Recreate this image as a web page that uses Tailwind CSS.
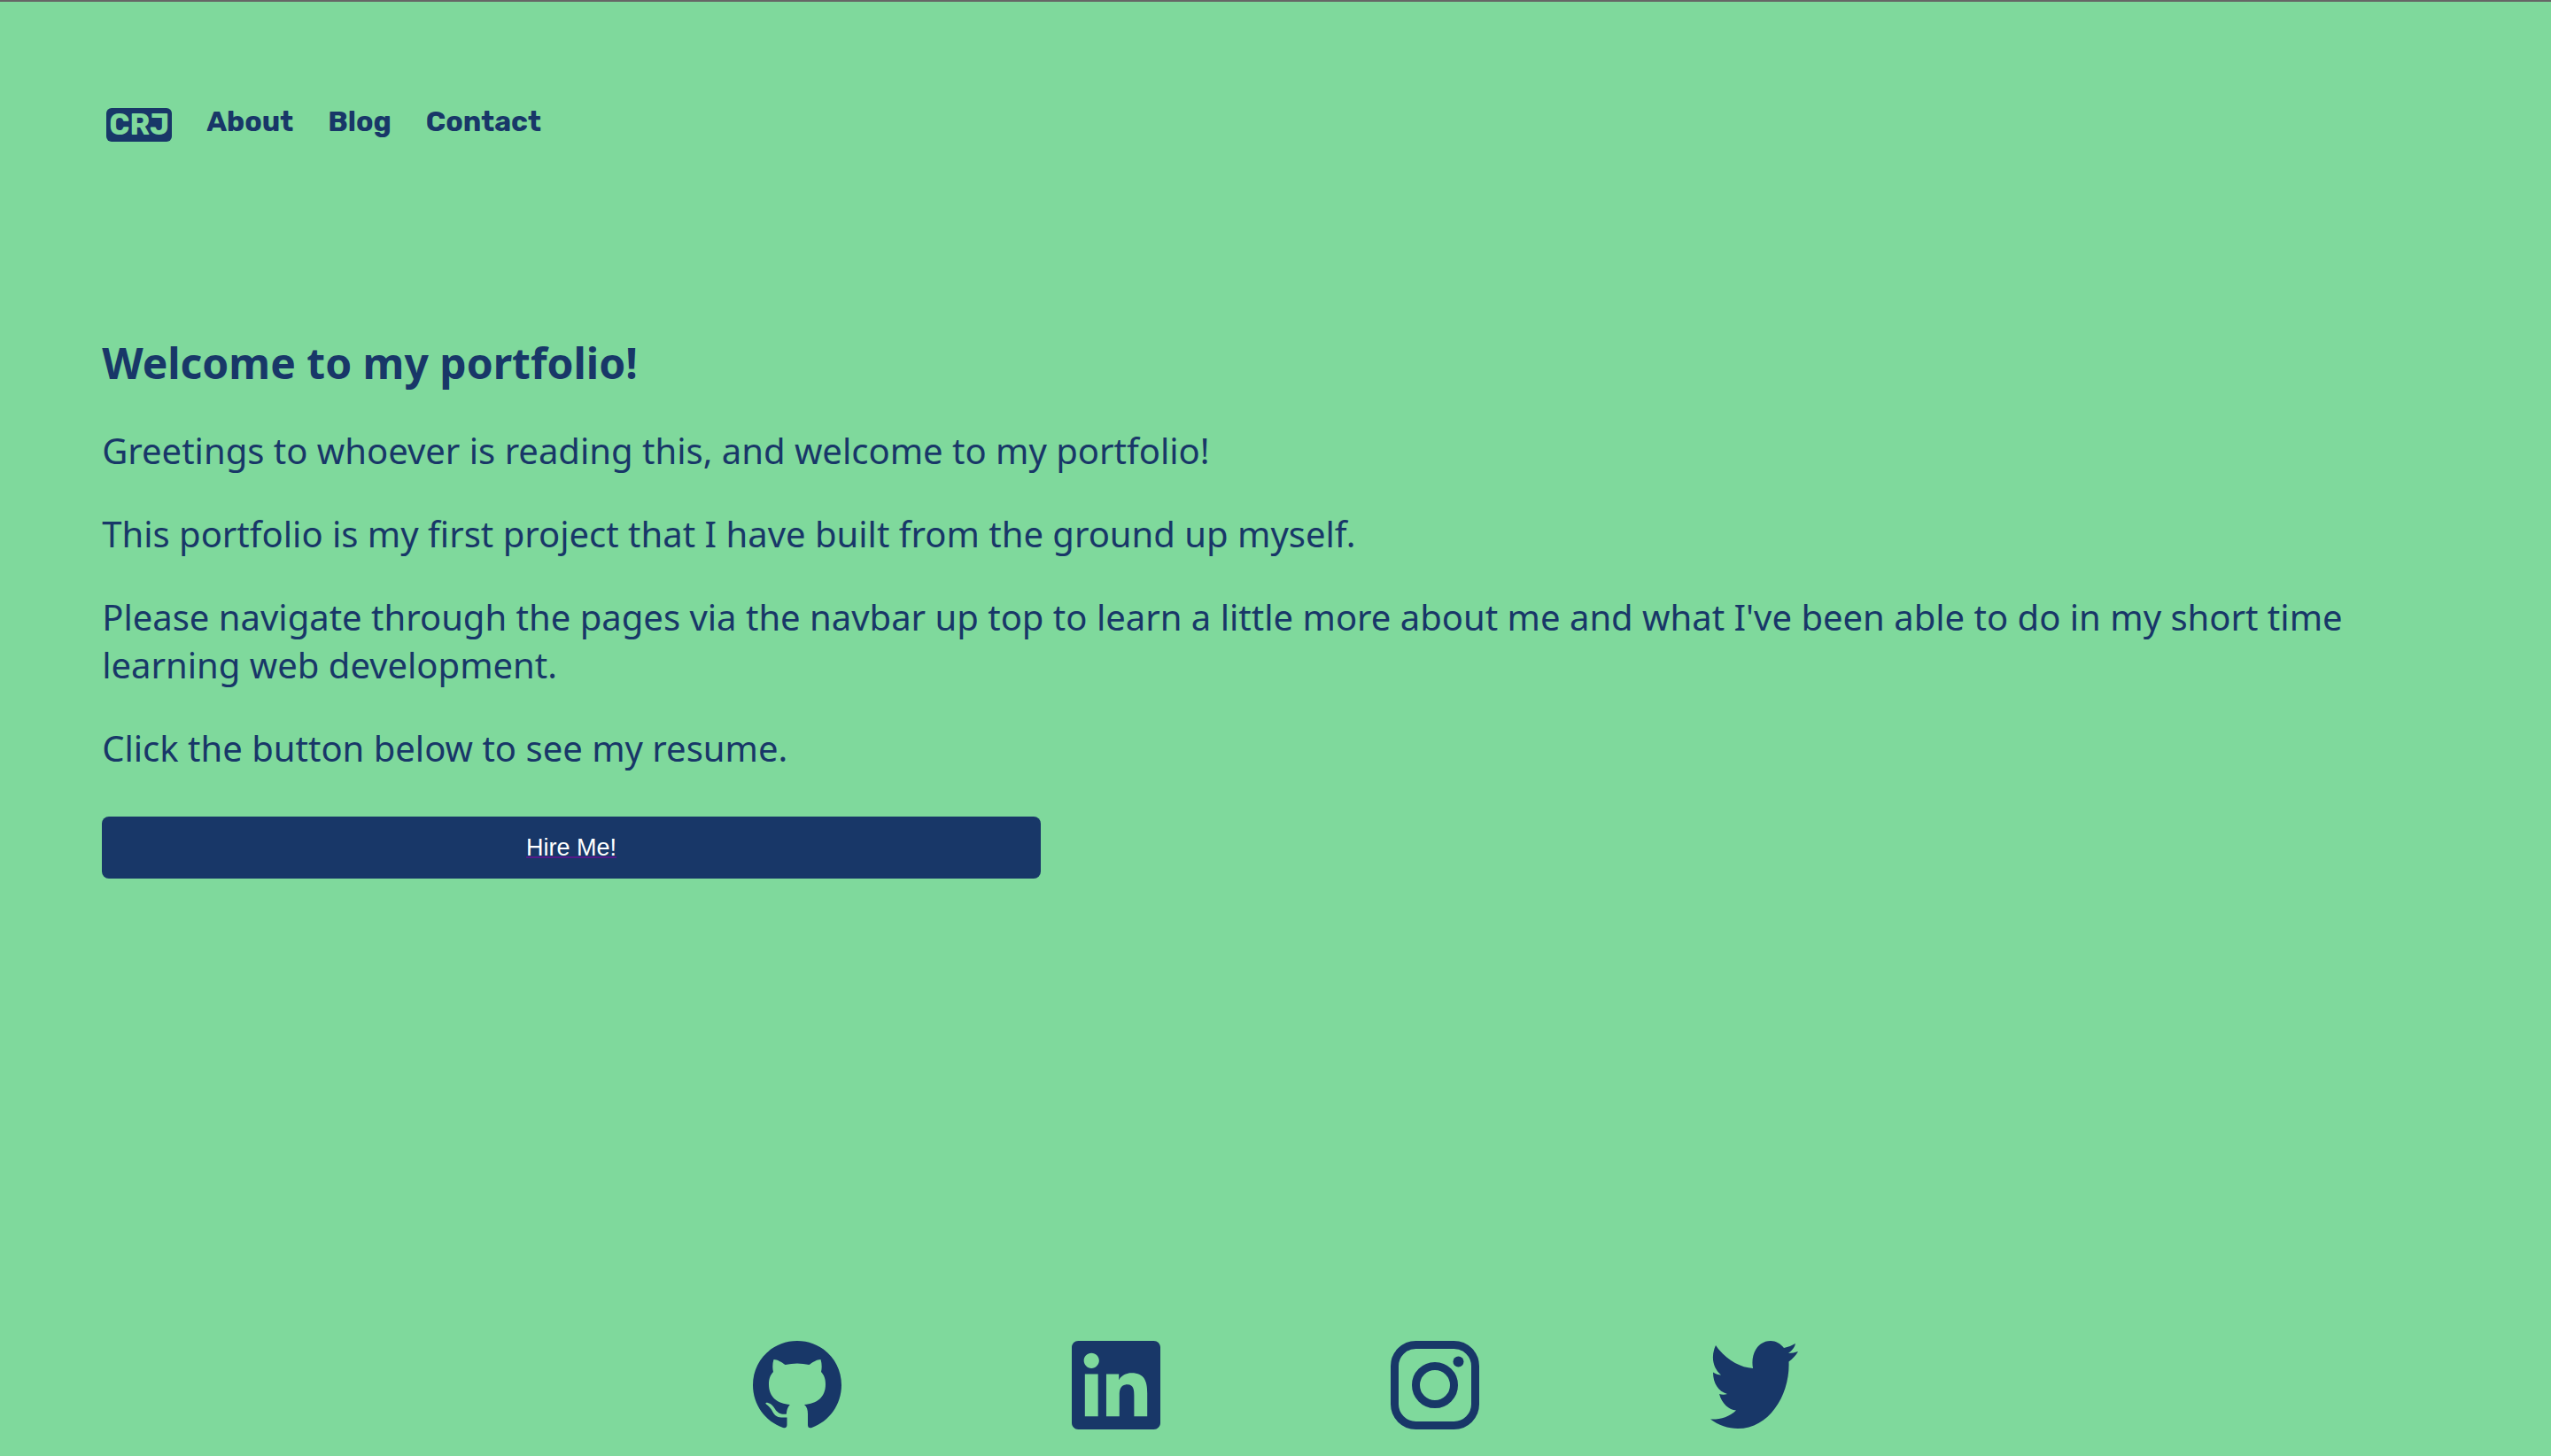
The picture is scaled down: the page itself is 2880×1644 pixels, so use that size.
<!DOCTYPE html>
<html lang="en">
<head>
<meta charset="utf-8">
<title>CRJ Portfolio</title>
<script src="https://cdn.jsdelivr.net/npm/@tailwindcss/browser@4"></script>
</head>
<body class="flex min-h-screen flex-col border-t-2 border-[#666666] bg-[#7fd99c] font-['Noto_Sans',sans-serif] text-[40px] leading-[54px] text-[#183768]">
  <header class="px-[4%] pt-[115px]">
    <nav class="flex items-start gap-[39px] pl-[5px] font-['Rubik','Inter',sans-serif] text-[32px] leading-10 font-bold">
      <a href="#" class="mt-[5px] flex h-[38px] w-[74px] items-center justify-center rounded-md bg-[#183768] text-[33px] text-[#7fd99c]">CRJ</a>
      <a href="#about">About</a>
      <a href="#blog">Blog</a>
      <a href="#contact">Contact</a>
    </nav>
  </header>
  <main class="flex flex-1 flex-col items-start gap-10 px-[4%] pt-[218px]">
    <h1 class="text-[48px] leading-[64px] font-bold">Welcome to my portfolio!</h1>
    <p>Greetings to whoever is reading this, and welcome to my portfolio!</p>
    <p>This portfolio is my first project that I have built from the ground up myself.</p>
    <p>Please navigate through the pages via the navbar up top to learn a little more about me and what I've been able to do in my short time learning web development.</p>
    <p>Click the button below to see my resume.</p>
    <button type="button" class="mt-[10px] h-[70px] w-[40%] rounded-lg bg-[#183768] font-['Liberation_Sans',sans-serif] text-[27px] leading-8 text-white underline decoration-[#551a8b] decoration-2 [text-decoration-skip-ink:none]">Hire Me!</button>
  </main>
  <footer class="flex justify-center gap-[260px] pb-[30px]">
    <a href="#github" aria-label="GitHub"><svg class="size-[100px]" viewBox="0 0 100 100" fill="currentColor"><path d="M50 0C22 0 0 22 0 50c0 22 14 41 34 48 3 .8 4.500-.5 4.500-3V86.500H32c-5 0-8-3-10-7-1.500-3-4-6-7-8-1.500-1 0-2.500 2-1.500 4 1 6 4 8 7 3 5 8 6.500 13 5.500 0-4 1.500-8.500 4-10.500C28 71 18 64 18 49c0-6 1.500-10 5-14-1-4-1-9 .5-14 4 0 9 3 13 6 9-2 18-2 27 0 4-3 9-6 13-6 1.500 5 1.500 10 .5 14 3.500 4 5 8 5 14 0 15-10 22-24 23 3 2.500 4 6 4 11v12c0 2.500 1.500 4 4.500 3C86 91 100 72 100 50 100 22 78 0 50 0z"/></svg></a>
    <a href="#linkedin" aria-label="LinkedIn"><svg class="size-[100px]" viewBox="0 0 24 24" fill="currentColor"><path d="M20.447 20.452h-3.554v-5.569c0-1.328-.027-3.037-1.852-3.037-1.853 0-2.136 1.445-2.136 2.939v5.667H9.351V9h3.414v1.561h.046c.477-.9 1.637-1.850 3.370-1.850 3.601 0 4.267 2.370 4.267 5.455v6.286zM5.337 7.433c-1.144 0-2.063-.926-2.063-2.065 0-1.138.92-2.063 2.063-2.063 1.140 0 2.064.925 2.064 2.063 0 1.139-.925 2.065-2.064 2.065zm1.782 13.019H3.555V9h3.564v11.452zM22.225 0H1.771C.792 0 0 .774 0 1.729v20.542C0 23.227.792 24 1.771 24h20.451C23.200 24 24 23.227 24 22.271V1.729C24 .774 23.200 0 22.222 0h.003z"/></svg></a>
    <a href="#instagram" aria-label="Instagram"><svg class="size-[100px]" viewBox="0 0 100 100" fill="none" stroke="currentColor" stroke-width="9"><rect x="4.500" y="4.500" width="91" height="91" rx="24"/><circle cx="50" cy="50" r="21.500"/><circle cx="76.500" cy="23.500" r="6" fill="currentColor" stroke="none"/></svg></a>
    <a href="#twitter" aria-label="Twitter"><svg class="size-[100px]" viewBox="0 0 100 100" fill="currentColor"><path d="M7 5C18 21 34 30 49 31 46 14 55 0 69 0c6 0 11 3 15 8 5-1 9-3 13-5-1 5-4 8-8 11 4 0 7-1 11-2-3 5-6 8-10.500 11.500C91 60 68 99 32 99 21 99 10 95 1 88.500 12 89 22 86 30 78.500 22 78 14 71 11 60c3 1 6 1 9 0C10 57 4 48 4 35.500c3 2 6 3 9 3C4 31 1 18 7 5z"/></svg></a>
  </footer>
</body>
</html>
